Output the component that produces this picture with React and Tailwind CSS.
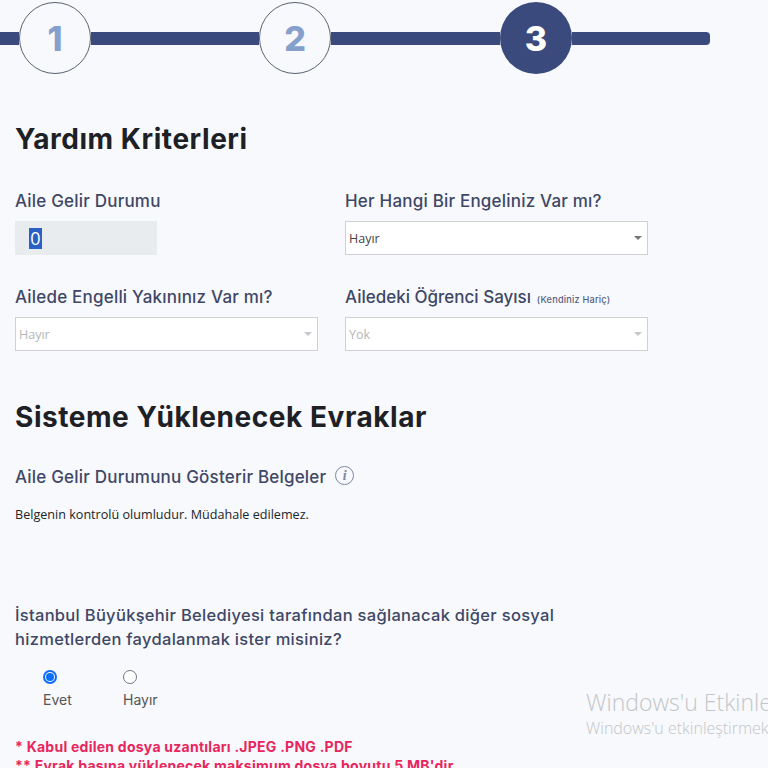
import React from "react";

const heading = "font-['Inter',sans-serif]";
const segoe = "font-['Open_Sans',sans-serif]";

const Step = ({ n, active }) => (
  <div
    className={
      active
        ? `w-[72px] h-[72px] rounded-full bg-[#3b4a7d] flex items-center justify-center text-white text-[34px] font-extrabold shrink-0 ${heading}`
        : `w-[72px] h-[72px] rounded-full bg-[#f7f9fc] border border-[#5b6170] flex items-center justify-center text-[#86a0cc] text-[34px] font-extrabold shrink-0 ${heading}`
    }
  >
    {n}
  </div>
);

const Bar = ({ className }) => <div className={`h-[13px] bg-[#3b4a7d] ${className}`} />;

const Label = ({ children, className = "" }) => (
  <div className={`text-[17px] tracking-[0.2px] leading-[22px] font-medium text-[#3f4766] whitespace-nowrap ${heading} ${className}`}>
    {children}
  </div>
);

const Select = ({ value, disabled }) => (
  <div className="w-[303px] h-[34px] bg-white border border-[#cfd1d4] flex items-center justify-between pl-[3px] pr-[5px]">
    <span className={`pt-[2px] text-[12.5px] ${segoe} ${disabled ? "text-[#b4b6ba]" : "text-[#444]"}`}>{value}</span>
    <span className={`w-0 h-0 border-x-[4px] border-x-transparent border-t-[4px] ${disabled ? "border-t-[#c6c8cc]" : "border-t-[#777]"}`} />
  </div>
);

const Radio = ({ label, checked, className }) => (
  <div className={`flex flex-col ${className}`}>
    <div className="h-[14px] flex">
      {checked ? (
        <span className="w-[14px] h-[14px] rounded-full border-2 border-[#0d6efd] flex items-center justify-center">
          <span className="w-[8px] h-[8px] rounded-full bg-[#0d6efd]" />
        </span>
      ) : (
        <span className="w-[14px] h-[14px] rounded-full border border-[#767676] bg-white" />
      )}
    </div>
    <span className={`mt-[7px] text-[14px] leading-[18px] text-[#555] ${heading}`}>{label}</span>
  </div>
);

export default function App() {
  return (
    <div className="relative w-[768px] h-[768px] overflow-hidden bg-[#f7f9fc]">
      <div className="flex items-center w-[710px] pt-[2px]">
        <Bar className="w-[19px]" />
        <Step n="1" />
        <Bar className="w-[168px]" />
        <Step n="2" />
        <Bar className="w-[169px]" />
        <Step n="3" active />
        <Bar className="flex-1 rounded-r-[4px]" />
      </div>

      <div className="px-[15px]">
        <h1 className={`mt-[47px] text-[28px] tracking-[0.55px] leading-[36px] font-bold text-[#1d2024] ${heading}`}>Yardım Kriterleri</h1>

        <div className="mt-[33px] grid grid-cols-[330px_303px] gap-y-[31px]">
          <div>
            <Label>Aile Gelir Durumu</Label>
            <div className="mt-[9px] w-[142px] h-[34px] bg-[#e9ecef] flex items-center pl-[14px]">
              <span className={`w-[13px] bg-[#2a5fc4] text-white text-[18px] leading-[21px] text-center ${segoe}`}>0</span>
            </div>
          </div>
          <div>
            <Label>Her Hangi Bir Engeliniz Var mı?</Label>
            <div className="mt-[9px]"><Select value="Hayır" /></div>
          </div>
          <div>
            <Label>Ailede Engelli Yakınınız Var mı?</Label>
            <div className="mt-[9px]"><Select value="Hayır" disabled /></div>
          </div>
          <div>
            <Label>
              <span className="tracking-normal">Ailedeki Öğrenci Sayısı</span>{" "}
              <span className="text-[9.2px] leading-none ml-[1px] text-[#5a6180]">(Kendiniz Hariç)</span>
            </Label>
            <div className="mt-[9px]"><Select value="Yok" disabled /></div>
          </div>
        </div>

        <h2 className={`mt-[48px] text-[28px] tracking-[0.55px] leading-[36px] font-bold text-[#1d2024] ${heading}`}>Sisteme Yüklenecek Evraklar</h2>

        <div className="mt-[31px] flex items-center gap-[9px]">
          <Label>Aile Gelir Durumunu Gösterir Belgeler</Label>
          <span className="w-[19px] h-[19px] -mt-[4px] rounded-full border-[1.5px] border-[#8087a0] flex items-center justify-center text-[#8087a0] text-[14px] font-bold italic font-['Liberation_Serif',serif]">i</span>
        </div>

        <p className={`mt-[18px] text-[12.6px] leading-[18px] text-[#212529] ${segoe}`}>Belgenin kontrolü olumludur. Müdahale edilemez.</p>

        <div className={`mt-[79px] w-[560px] text-[16.5px] tracking-[0.3px] leading-[24px] font-medium text-[#3f4766] ${heading}`}>
          İstanbul Büyükşehir Belediyesi tarafından sağlanacak diğer sosyal hizmetlerden faydalanmak ister misiniz?
        </div>

        <div className="mt-[19px] flex pl-[28px]">
          <Radio label="Evet" checked className="w-[80px]" />
          <Radio label="Hayır" />
        </div>

        <div className={`mt-[28px] text-[14px] tracking-[0.25px] leading-[19px] font-bold text-[#e8265e] whitespace-nowrap ${heading}`}>
          <div>* Kabul edilen dosya uzantıları .JPEG .PNG .PDF</div>
          <div>** Evrak başına yüklenecek maksimum dosya boyutu 5 MB'dir</div>
        </div>
      </div>

      {/* windows watermark */}
      <div className={`absolute left-[586px] top-[688px] text-[#c4c6c9] whitespace-nowrap font-light ${segoe}`}>
        <div className="text-[23px] leading-[28px]">Windows'u Etkinleştir</div>
        <div className="text-[16px] leading-[24px]">Windows'u etkinleştirmek için Ayarlar'a gidin</div>
      </div>
    </div>
  );
}
